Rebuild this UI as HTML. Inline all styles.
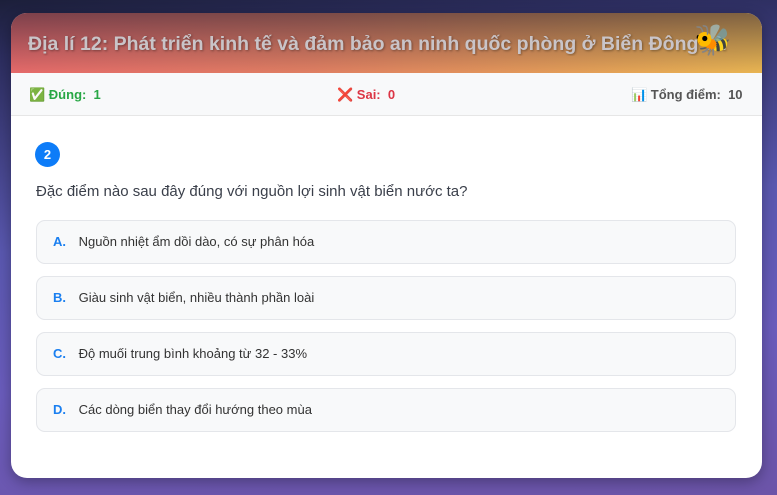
<!DOCTYPE html>
<html><head><meta charset="utf-8"><style>
*{margin:0;padding:0;box-sizing:border-box}
body{width:777px;height:495px;overflow:hidden;font-family:"Liberation Sans","DejaVu Sans",sans-serif;
background:linear-gradient(175deg,#1c1f3a 0%,#2c2d5e 10%,#5a58b0 45%,#6a5cbc 70%,#6c54a8 100%);position:relative}
.card{position:absolute;left:11px;top:13px;width:751px;height:465px;background:#fff;border-radius:16px;overflow:hidden;box-shadow:0 4px 14px rgba(0,0,0,.3)}
.hdr{height:60px;background:linear-gradient(90deg,#e56a6a 0%,#e07f62 40%,#e49e58 75%,#e9b552 100%);position:relative}
.hdr:before{content:"";position:absolute;inset:0;background:linear-gradient(180deg,rgba(40,30,50,.55),rgba(40,30,50,0))}
.title{position:absolute;left:17px;top:20px;font-size:19.5px;font-weight:bold;color:#c9c4c8;white-space:nowrap;text-shadow:1px 1px 2px rgba(0,0,0,.35);width:718px;overflow:hidden}
.bee{position:absolute;left:683px;top:10px;font-size:30px;font-family:"DejaVu Sans",sans-serif}
.stats{height:43px;background:#f8f9fa;border-bottom:1px solid #e6e6e6;position:relative;font-size:13px;font-weight:bold}
.stats span{position:absolute;top:14px}
.q{position:absolute;left:25px;top:170px;font-size:15px;color:#3a3f4a}
.num{position:absolute;left:24px;top:129px;width:25px;height:25px;border-radius:50%;background:#0d7cf8;color:#fff;font-size:13px;font-weight:bold;text-align:center;line-height:25px}
.opt{position:absolute;left:25px;width:700px;height:44px;background:#f8f9fa;border:1px solid #e4e6ea;border-radius:9px;font-size:13px;color:#333;line-height:42px;padding-left:16px}
.opt b{color:#1a7ff0;margin-right:9px}
</style></head><body>
<div class="card">
<div class="hdr"><div class="title">Địa lí 12: Phát triển kinh tế và đảm bảo an ninh quốc phòng ở Biển Đông và</div><div class="bee">🐝</div></div>
<div class="stats">
<span style="left:18px;color:#28a745">✅ Đúng:&nbsp; 1</span>
<span style="left:326px;color:#dc3545">❌ Sai:&nbsp; 0</span>
<span style="left:620px;color:#555">📊 Tổng điểm:&nbsp; 10</span>
</div>
<div class="num">2</div>
<div class="q">Đặc điểm nào sau đây đúng với nguồn lợi sinh vật biển nước ta?</div>
<div class="opt" style="top:207px"><b>A.</b> Nguồn nhiệt ẩm dồi dào, có sự phân hóa</div>
<div class="opt" style="top:263px"><b>B.</b> Giàu sinh vật biển, nhiều thành phần loài</div>
<div class="opt" style="top:319px"><b>C.</b> Độ muối trung bình khoảng từ 32 - 33%</div>
<div class="opt" style="top:375px"><b>D.</b> Các dòng biển thay đổi hướng theo mùa</div>
</div>
</body></html>
